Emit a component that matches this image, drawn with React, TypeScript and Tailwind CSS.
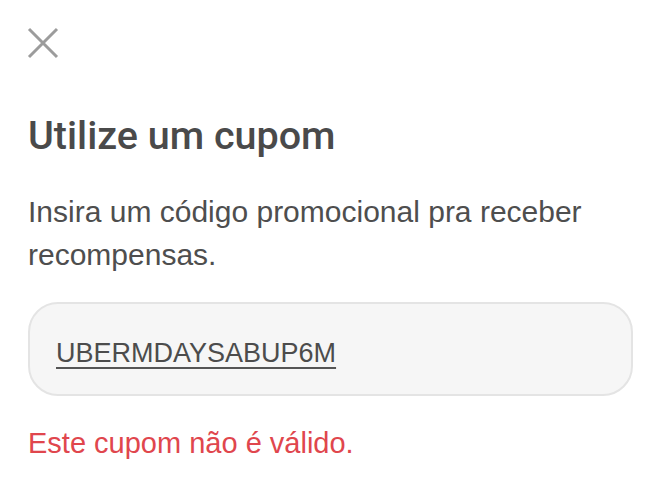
import { useState } from "react";

// Coupon entry sheet
function CloseIcon() {
  return (
    <svg width="32" height="32" viewBox="0 0 32 32" fill="none" className="block">
      <path d="M2 2L30 30M30 2L2 30" stroke="#9c9c9c" strokeWidth="3" strokeLinecap="butt" />
    </svg>
  );
}

export default function App() {
  const [code] = useState("UBERMDAYSABUP6M");

  return (
    <div className="min-h-[500px] w-full bg-white font-['Liberation_Sans',Arial,sans-serif] text-[#4a4a4a]">
      <div className="px-7 pt-[27px]">
        <button className="-ml-px block">
          <CloseIcon />
        </button>

        <h1 className="mt-[53px] font-['Roboto',Arial,sans-serif] text-[39.5px] font-medium leading-[48px] text-[#4a4a4a]">
          Utilize um cupom
        </h1>

        <p className="mt-[30px] text-[30px] leading-[43px] text-[#4e4e4e]">
          Insira um código promocional pra receber recompensas.
        </p>

        <div className="mt-[26px] flex h-[94px] w-[605px] items-center rounded-[30px] border-2 border-[#e4e4e4] bg-[#f6f6f6] pl-[26px] pt-2">
          <span className="text-[27px] leading-[34px] text-[#4c4c4c] underline decoration-2 underline-offset-[5px] decoration-[#555]">
            {code}
          </span>
        </div>

        <p className="mt-[27px] text-[29px] leading-[40px] text-[#e0464d]">
          Este cupom não é válido.
        </p>
      </div>
    </div>
  );
}
